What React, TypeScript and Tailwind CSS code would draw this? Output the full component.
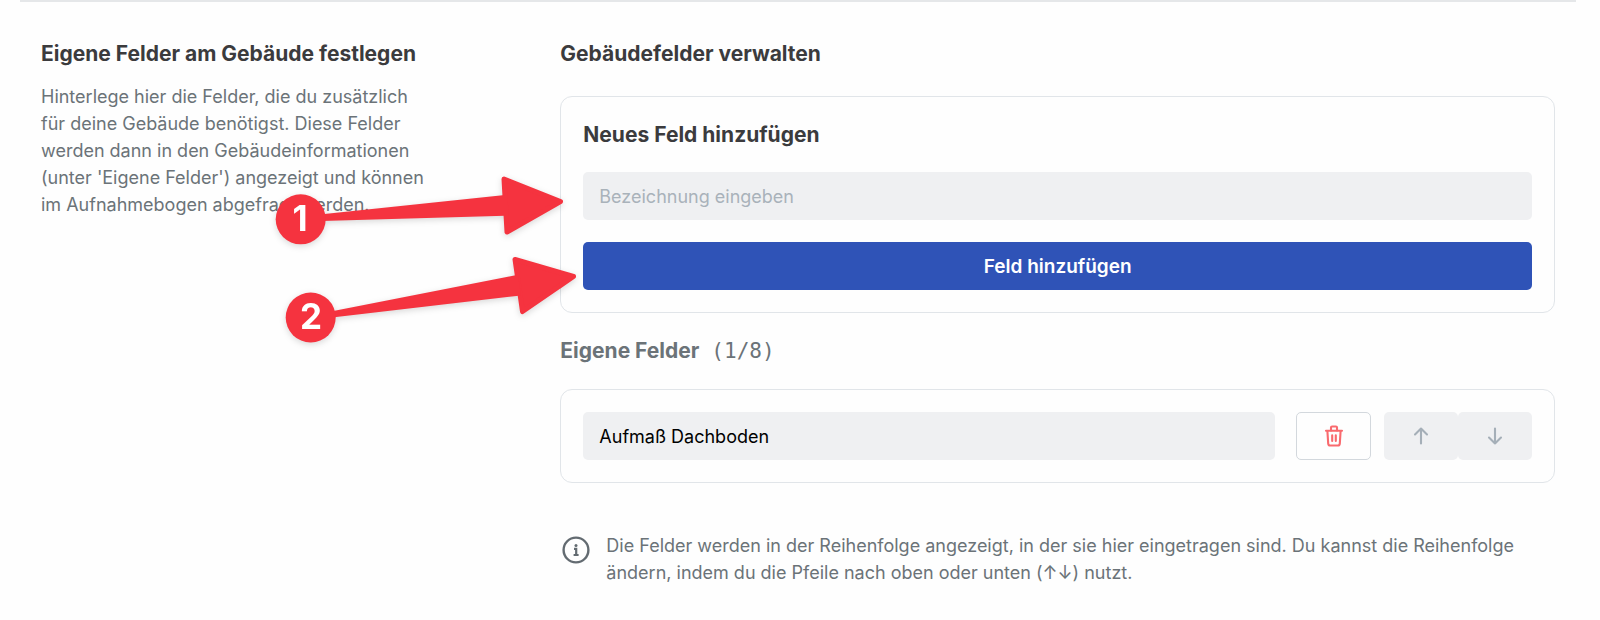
import { useState } from 'react'

const MAX_FIELDS = 8

function TrashIcon() {
  return (
    <svg width="20" height="22" viewBox="0 0 20 22" fill="none" stroke="#f96a6e" strokeWidth="2.1" strokeLinecap="round" strokeLinejoin="round" aria-hidden="true">
      <path d="M2 5.8H18" />
      <path d="M7 5.5V2.6Q7 1.5 8.1 1.5H11.9Q13 1.5 13 2.6V5.5" />
      <path d="M3.4 6L4.2 18.6Q4.4 20.5 6.2 20.5H13.8Q15.6 20.5 15.8 18.6L16.6 6" />
      <path d="M8.2 10.2V16M11.8 10.2V16" />
    </svg>
  )
}

function ArrowIcon({ down = false }: { down?: boolean }) {
  return (
    <svg width="16" height="18" viewBox="0 0 16 18" fill="none" stroke="#a5afb8" strokeWidth="2.1" strokeLinecap="round" strokeLinejoin="round" aria-hidden="true">
      <path d={down ? 'M8 1.5V16.5M2 10.5L8 16.5L14 10.5' : 'M8 16.5V1.5M2 7.5L8 1.5L14 7.5'} />
    </svg>
  )
}

function InfoIcon() {
  return (
    <svg width="28" height="28" viewBox="0 0 28 28" fill="none" className="shrink-0" aria-hidden="true">
      <circle cx="14" cy="14" r="12.4" stroke="#636b71" strokeWidth="2.4" />
      <circle cx="14" cy="9.6" r="1.5" fill="#636b71" />
      <path d="M12 12.9H14.2V19M11.6 19H16.6" stroke="#636b71" strokeWidth="2.2" />
    </svg>
  )
}

// numbered arrows that lie over the form
function Hints() {
  return (
    <svg
      width="600"
      height="360"
      viewBox="0 0 600 360"
      className="pointer-events-none absolute top-0 left-0 drop-shadow-[0_2px_3px_rgba(0,0,0,0.15)]"
      aria-hidden="true"
    >
      <g fill="#f5333f" stroke="#f5333f" strokeWidth="5" strokeLinejoin="round">
        <path d="M504 179L560.5 201.5L507 232Z" />
        <path d="M515 259.5L573.5 276.5L522.5 311.5Z" />
      </g>
      <g fill="#f5333f">
        <path d="M322 214.3L505 195V215.7L322 221Z" />
        <path d="M332 311.2L518 274.8L521 295.4L332 317.6Z" />
        <circle cx="300.7" cy="219.3" r="25" />
        <circle cx="310.7" cy="317.5" r="25" />
      </g>
      <g fill="#fff" textAnchor="middle" className="text-[35px] font-bold">
        <text x="300" y="231">1</text>
        <text x="311" y="329">2</text>
      </g>
    </svg>
  )
}

export default function App() {
  const [name, setName] = useState('')
  const [fields, setFields] = useState(['Aufmaß Dachboden'])

  const addField = () => {
    if (!name.trim() || fields.length >= MAX_FIELDS) return
    setFields([...fields, name.trim()])
    setName('')
  }

  const move = (from: number, to: number) => {
    const next = [...fields]
    const [item] = next.splice(from, 1)
    next.splice(to, 0, item)
    setFields(next)
  }

  return (
    <main className="relative min-h-screen bg-[#fefefe] pr-6 pl-5 font-['Inter','Liberation_Sans',sans-serif] text-lg leading-[27px] text-[#6b7378]">
      <div className="grid grid-cols-3 gap-11 border-t-2 border-[#e5e7e9] px-[21px] pt-9 pb-8">
        <section className="pr-[84px]">
          <h2 className="text-[21px] leading-8 font-bold text-[#3b3b3d] whitespace-nowrap">Eigene Felder am Gebäude festlegen</h2>
          <p className="mt-[13px]">
            Hinterlege hier die Felder, die du zusätzlich für deine Gebäude benötigst. Diese Felder werden dann in den
            Gebäudeinformationen (unter 'Eigene Felder') angezeigt und können im Aufnahmebogen abgefragt werden.
          </p>
        </section>

        <section className="col-span-2">
          <h2 className="text-[21px] leading-8 font-bold text-[#3b3b3d]">Gebäudefelder verwalten</h2>

          <form
            className="mt-[26px] rounded-xl border border-[#e1e5e9] p-[22px]"
            onSubmit={(e) => {
              e.preventDefault()
              addField()
            }}
          >
            <label htmlFor="new-field" className="block text-[21px] leading-8 font-bold text-[#3b3b3d]">
              Neues Feld hinzufügen
            </label>
            <input
              id="new-field"
              type="text"
              value={name}
              onChange={(e) => setName(e.target.value)}
              placeholder="Bezeichnung eingeben"
              className="mt-[21px] block h-12 w-full rounded-[5px] bg-[#eff0f2] px-4 text-black placeholder:text-[#a9b2ba]"
            />
            <button type="submit" className="mt-[22px] block h-12 w-full rounded-[5px] bg-[#2f53b7] text-[19px] font-semibold text-white">
              Feld hinzufügen
            </button>
          </form>

          <div className="mt-[22px] flex items-center gap-3 text-[21px] leading-8">
            <h3 className="font-bold">Eigene Felder</h3>
            <span className="font-['DejaVu_Sans_Mono',monospace]">
              ({fields.length}/{MAX_FIELDS})
            </span>
          </div>

          <ul className="mt-[22px] flex flex-col gap-[22px] rounded-xl border border-[#e1e5e9] p-[22px]">
            {fields.map((field, i) => (
              <li key={i} className="flex">
                <input
                  type="text"
                  aria-label={`Feld ${i + 1}`}
                  value={field}
                  onChange={(e) => setFields(fields.map((f, j) => (j === i ? e.target.value : f)))}
                  className="h-12 min-w-0 flex-1 rounded-[5px] bg-[#eff0f2] px-4 text-black"
                />
                <button
                  type="button"
                  aria-label="Feld löschen"
                  onClick={() => setFields(fields.filter((_, j) => j !== i))}
                  className="ml-[21px] flex h-12 w-[75px] items-center justify-center rounded-[5px] border border-[#d3d8dd]"
                >
                  <TrashIcon />
                </button>
                <button
                  type="button"
                  aria-label="Nach oben"
                  disabled={i === 0}
                  onClick={() => move(i, i - 1)}
                  className="ml-[13px] flex h-12 w-[74px] items-center justify-center rounded-[5px] bg-[#eff0f2]"
                >
                  <ArrowIcon />
                </button>
                <button
                  type="button"
                  aria-label="Nach unten"
                  disabled={i === fields.length - 1}
                  onClick={() => move(i, i + 1)}
                  className="flex h-12 w-[74px] items-center justify-center rounded-[5px] bg-[#eff0f2]"
                >
                  <ArrowIcon down />
                </button>
              </li>
            ))}
          </ul>

          <div className="mt-[49px] flex items-start gap-4 pl-0.5">
            <div className="pt-1">
              <InfoIcon />
            </div>
            <p>
              Die Felder werden in der Reihenfolge angezeigt, in der sie hier eingetragen sind. Du kannst die Reihenfolge
              ändern, indem du die Pfeile nach oben oder unten (↑↓) nutzt.
            </p>
          </div>
        </section>
      </div>

      <Hints />
    </main>
  )
}
